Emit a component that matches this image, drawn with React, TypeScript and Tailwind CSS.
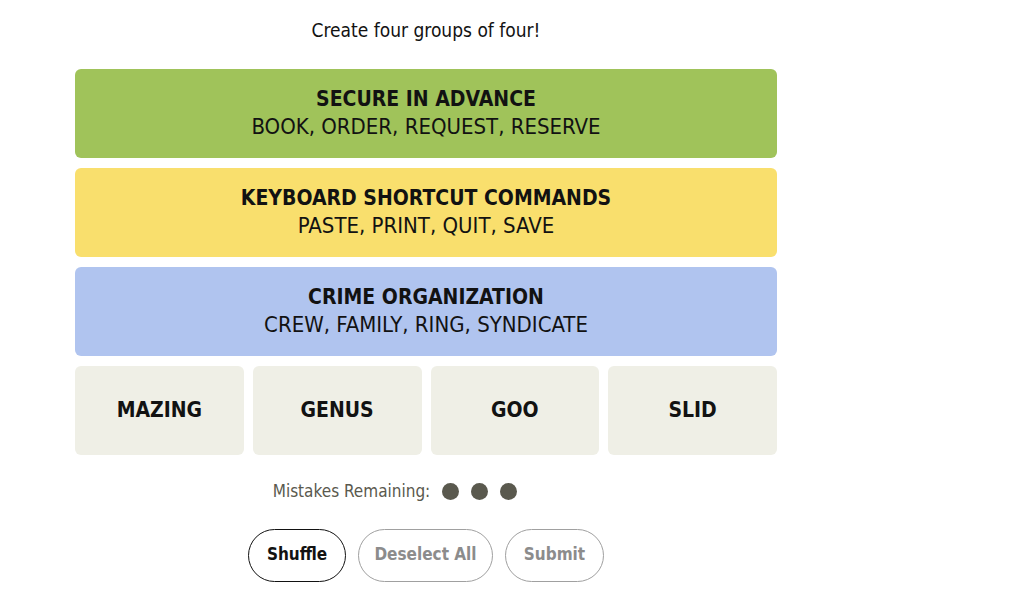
import React from "react";

const FONT = "font-['Liberation_Sans_Narrow','DejaVu_Sans_Condensed',sans-serif]";

const solved = [
  { title: "SECURE IN ADVANCE", words: "BOOK, ORDER, REQUEST, RESERVE", bg: "bg-[#a0c35a]" },
  { title: "KEYBOARD SHORTCUT COMMANDS", words: "PASTE, PRINT, QUIT, SAVE", bg: "bg-[#f9df6d]" },
  { title: "CRIME ORGANIZATION", words: "CREW, FAMILY, RING, SYNDICATE", bg: "bg-[#b0c4ef]" },
];

const remaining = ["MAZING", "GENUS", "GOO", "SLID"];

const App: React.FC = () => {
  return (
    <div className={`min-h-screen bg-white text-[#121212] ${FONT}`}>
      <div className="w-[852px] flex flex-col items-center pt-[18px]">
        <p className="text-[19px] leading-6">Create four groups of four!</p>

        {/* Board */}
        <div className="mt-[27px] w-[702px] flex flex-col gap-[10px]">
          {solved.map((g) => (
            <div
              key={g.title}
              className={`h-[89px] rounded-md ${g.bg} flex flex-col items-center justify-center pb-[2px]`}
            >
              <div className="text-[21px] font-bold leading-[28px]">{g.title}</div>
              <div className="text-[22px] leading-[28px]">{g.words}</div>
            </div>
          ))}
          <div className="grid grid-cols-4 gap-[9px]">
            {remaining.map((w) => (
              <div
                key={w}
                className="h-[89px] rounded-md bg-[#efefe6] flex items-center justify-center text-[21px] font-bold"
              >
                {w}
              </div>
            ))}
          </div>
        </div>

        {/* Mistakes */}
        <div className="mt-[24px] pr-[62px] flex items-center gap-3">
          <span className="text-[17px] text-[#5a594e]">Mistakes Remaining:</span>
          <div className="flex gap-3">
            <span className="w-[17px] h-[17px] rounded-full bg-[#5a594e]" />
            <span className="w-[17px] h-[17px] rounded-full bg-[#5a594e]" />
            <span className="w-[17px] h-[17px] rounded-full bg-[#5a594e]" />
          </div>
        </div>

        {/* Controls */}
        <div className="mt-[24px] flex gap-3">
          <button className="h-[53px] w-[98px] rounded-full border border-[#121212] text-[17px] font-bold text-[#121212]">
            Shuffle
          </button>
          <button className="h-[53px] w-[135px] rounded-full border border-[#a0a0a0] text-[17px] font-bold text-[#8c8c8c]">
            Deselect All
          </button>
          <button className="h-[53px] w-[99px] rounded-full border border-[#a0a0a0] text-[17px] font-bold text-[#8c8c8c]">
            Submit
          </button>
        </div>
      </div>
    </div>
  );
};

export default App;
